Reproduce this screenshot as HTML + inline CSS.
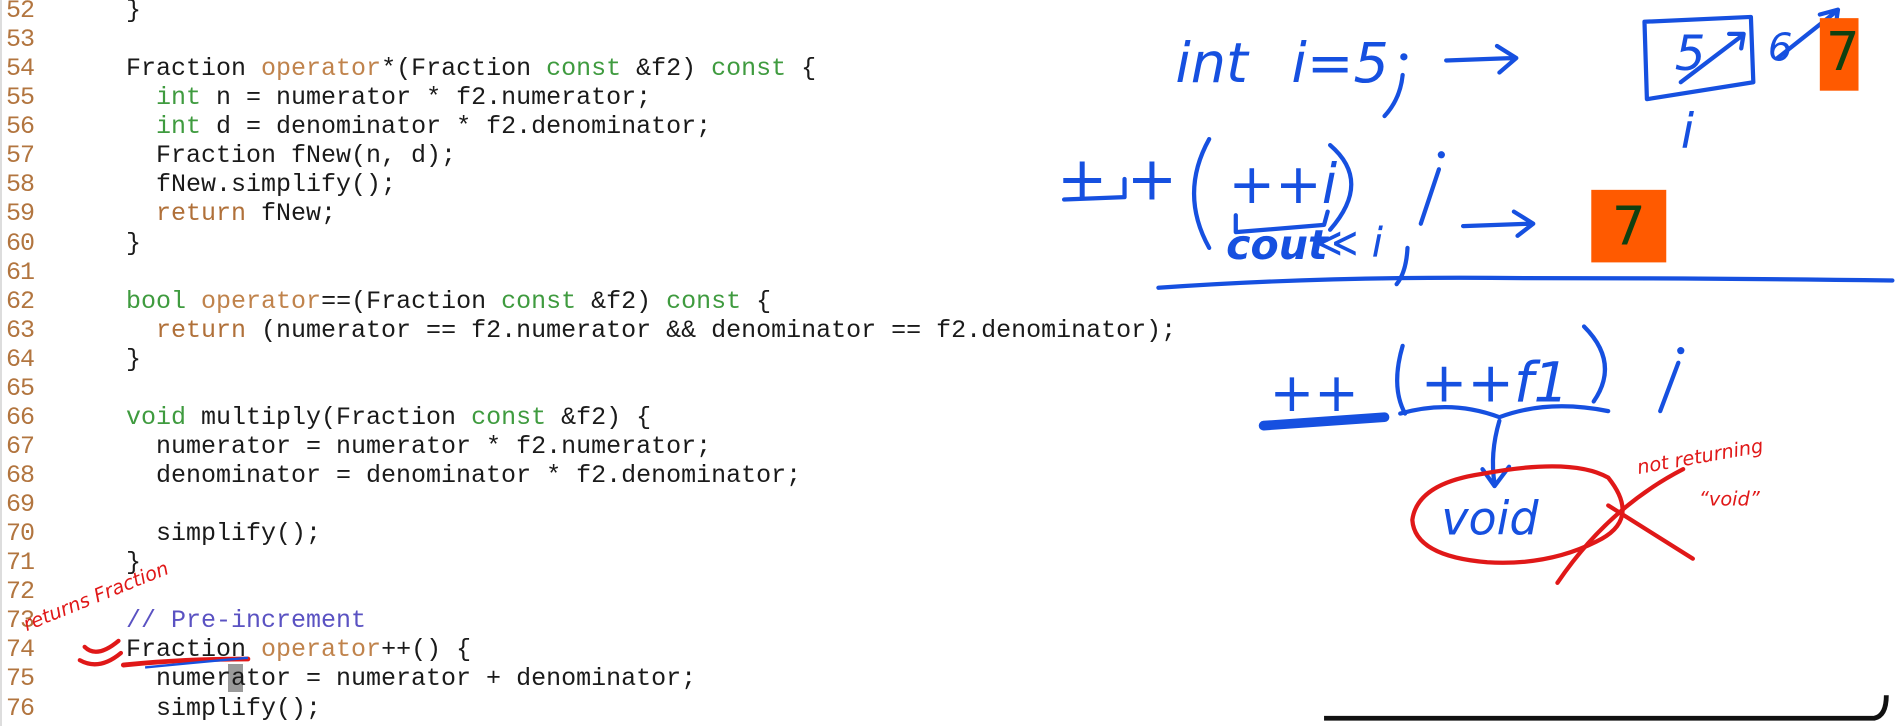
<!DOCTYPE html>
<html><head><meta charset="utf-8"><style>
html,body{margin:0;padding:0;background:#fff;width:1896px;height:726px;overflow:hidden;position:relative}
.code{position:absolute;left:0;top:-4px;font-family:"Liberation Mono",monospace;font-size:25px;line-height:29.07px;color:#1a1a1a;white-space:pre}
.ln{position:absolute;left:6px;top:-4px;font-family:"Liberation Mono",monospace;font-size:25px;line-height:29.07px;color:#b2753f;white-space:pre;letter-spacing:-1px}
.g{color:#3f9b3f}.o{color:#c0834c}.r{color:#b07039}.c{color:#5a52c2}
.edge{position:absolute;left:0;top:0;width:2px;height:726px;background:#ddd}
svg{position:absolute;left:0;top:0}
</style></head><body>
<div class="edge"></div>
<div style="position:absolute;left:228px;top:664px;width:15px;height:28px;background:#9a9a9a"></div>
<div class="ln">52
53
54
55
56
57
58
59
60
61
62
63
64
65
66
67
68
69
70
71
72
73
74
75
76</div>
<div class="code" style="left:126px">}

Fraction <span class="o">operator</span>*(Fraction <span class="g">const</span> &amp;f2) <span class="g">const</span> {
  <span class="g">int</span> n = numerator * f2.numerator;
  <span class="g">int</span> d = denominator * f2.denominator;
  Fraction fNew(n, d);
  fNew.simplify();
  <span class="r">return</span> fNew;
}

<span class="g">bool</span> <span class="o">operator</span>==(Fraction <span class="g">const</span> &amp;f2) <span class="g">const</span> {
  <span class="r">return</span> (numerator == f2.numerator &amp;&amp; denominator == f2.denominator);
}

<span class="g">void</span> multiply(Fraction <span class="g">const</span> &amp;f2) {
  numerator = numerator * f2.numerator;
  denominator = denominator * f2.denominator;

  simplify();
}

<span class="c">// Pre-increment</span>
Fraction <span class="o">operator</span>++() {
  numerator = numerator + denominator;
  simplify();</div>
<svg width="1896" height="726" viewBox="0 0 1568 600.4" xmlns="http://www.w3.org/2000/svg">
<g fill="none" stroke="#1650e0" stroke-width="3.5" stroke-linecap="round" stroke-linejoin="round">
<path d="M1196 50 L1252 48 M1238 38 L1254 48 L1240 60"/>
<path d="M1360 18 L1448 14 L1450 68 L1362 82 Z"/>
<path d="M1390 68 L1440 30 M1430 28 L1442 28 L1440 40"/>
<path d="M1470 48 L1518 10 M1505 12 L1520 8 L1518 22"/>
<path d="M880 165 L930 163 L930 148"/>
<path d="M1000 115 Q975 160 1000 205"/>
<path d="M1022 178 L1022 192 L1095 186 L1098 175"/>
<path d="M1100 120 Q1135 150 1100 190"/>
<path d="M1210 187 L1265 185 M1252 175 L1268 185 L1255 195"/>
<path d="M958 238 Q1100 228 1260 230 Q1420 230 1565 232"/>
<path d="M1160 286 Q1150 320 1162 342"/>
<path d="M1310 270 Q1340 300 1318 332"/>
<path d="M1158 342 Q1200 330 1240 345 Q1280 330 1330 340"/>
<path d="M1240 348 Q1232 375 1236 400 M1226 388 L1236 402 L1248 386"/>
<path d="M1373 340 L1388 300"/>
<path d="M1190 140 L1175 185"/>
<path d="M1160 62 Q1158 82 1145 96"/>
<path d="M1164 205 Q1163 225 1155 235"/>
</g>
<g fill="#1650e0"><circle cx="1192" cy="128" r="3"/><circle cx="1161" cy="47" r="3"/><circle cx="1390" cy="290" r="3"/></g>
<path d="M1045 352 L1145 345" stroke="#1650e0" stroke-width="8" stroke-linecap="round"/>
<g font-family="'DejaVu Sans',sans-serif" fill="#1650e0" font-style="italic">
<text x="972" y="68" font-size="46">int</text>
<text x="1068" y="68" font-size="46">i=5</text>
<text x="1390" y="122" font-size="40">i</text>
<text x="874" y="165" font-size="50">+ +</text>
<text x="1016" y="168" font-size="46">++i</text>
<text x="1014" y="214" font-size="34" font-weight="bold">cout</text>
<text x="1088" y="212" font-size="34">≪ i</text>
<text x="1050" y="340" font-size="44">++</text>
<text x="1175" y="332" font-size="46">++f1</text>
<text x="1192" y="442" font-size="38">void</text>
<text x="1462" y="50" font-size="32">6</text>
<text x="1385" y="58" font-size="40">5</text>
</g>
<rect x="1505" y="15" width="32" height="60" fill="#ff5a00"/>
<text x="1510" y="58" font-family="'DejaVu Sans',sans-serif" font-size="44" fill="#104010">7</text>
<rect x="1316" y="157" width="62" height="60" fill="#ff5a00"/>
<text x="1333" y="202" font-family="'DejaVu Sans',sans-serif" font-size="44" fill="#104010">7</text>
<g fill="none" stroke="#e01818" stroke-width="3.5" stroke-linecap="round">
<path d="M1225 392 Q1300 378 1330 395 Q1358 430 1320 448 Q1280 468 1230 465 Q1170 460 1168 430 Q1172 400 1225 392 Z"/>
<path d="M1288 482 Q1330 420 1392 388"/>
<path d="M1330 418 L1400 462"/>
<path d="M70 535 Q80 545 98 530 M66 546 Q82 555 100 540"/>
<path d="M102 550 Q150 545 205 545" stroke-width="4"/>
</g>
<path d="M120 552 Q160 548 205 544" stroke="#1650e0" stroke-width="2" fill="none"/>
<g font-family="'DejaVu Sans',sans-serif" fill="#e01818" font-style="italic">
<text x="22" y="522" font-size="16" transform="rotate(-22 22 522)">returns Fraction</text>
<text x="1355" y="392" font-size="16" transform="rotate(-10 1355 392)">not returning</text>
<text x="1405" y="418" font-size="16">“void”</text>
</g>
<path d="M1095 594 L1550 594 Q1560 592 1560 575" stroke="#111" stroke-width="4" fill="none"/>
</svg>
</body></html>
